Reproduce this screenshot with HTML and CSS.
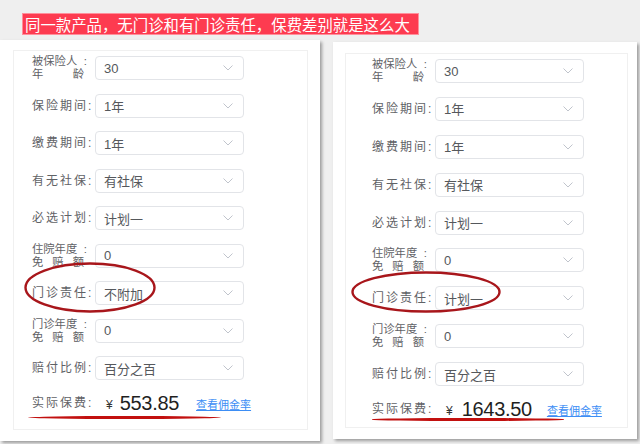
FILE: index.html
```html
<!DOCTYPE html>
<html lang="zh">
<head>
<meta charset="utf-8">
<link rel="stylesheet" href="styles.css">
</head>
<body>
<div class="title">同一款产品，无门诊和有门诊责任，保费差别就是这么大</div>
<div class="panels">
  <div class="panel panel-left">
    <div class="inner">
      <div class="form">
        <div class="label two"><div class="l1"><span>被保险人</span><span>:</span></div><div class="l2"><span>年</span><span>龄</span></div></div>
        <div class="select"><span>30</span><svg class="chev" width="10" height="6" viewBox="0 0 10 6"><path d="M0.5 0.5 L5 5 L9.5 0.5" fill="none" stroke="#c0c4cc" stroke-width="1"/></svg></div>
        <div class="label">保险期间:</div>
        <div class="select"><span>1年</span><svg class="chev" width="10" height="6" viewBox="0 0 10 6"><path d="M0.5 0.5 L5 5 L9.5 0.5" fill="none" stroke="#c0c4cc" stroke-width="1"/></svg></div>
        <div class="label">缴费期间:</div>
        <div class="select"><span>1年</span><svg class="chev" width="10" height="6" viewBox="0 0 10 6"><path d="M0.5 0.5 L5 5 L9.5 0.5" fill="none" stroke="#c0c4cc" stroke-width="1"/></svg></div>
        <div class="label">有无社保:</div>
        <div class="select"><span>有社保</span><svg class="chev" width="10" height="6" viewBox="0 0 10 6"><path d="M0.5 0.5 L5 5 L9.5 0.5" fill="none" stroke="#c0c4cc" stroke-width="1"/></svg></div>
        <div class="label">必选计划:</div>
        <div class="select"><span>计划一</span><svg class="chev" width="10" height="6" viewBox="0 0 10 6"><path d="M0.5 0.5 L5 5 L9.5 0.5" fill="none" stroke="#c0c4cc" stroke-width="1"/></svg></div>
        <div class="label two"><div class="l1"><span>住院年度</span><span>:</span></div><div class="l2"><span>免</span><span>赔</span><span>额</span></div></div>
        <div class="select"><span>0</span><svg class="chev" width="10" height="6" viewBox="0 0 10 6"><path d="M0.5 0.5 L5 5 L9.5 0.5" fill="none" stroke="#c0c4cc" stroke-width="1"/></svg></div>
        <div class="label">门诊责任:</div>
        <div class="select"><span>不附加</span><svg class="chev" width="10" height="6" viewBox="0 0 10 6"><path d="M0.5 0.5 L5 5 L9.5 0.5" fill="none" stroke="#c0c4cc" stroke-width="1"/></svg></div>
        <div class="label two"><div class="l1"><span>门诊年度</span><span>:</span></div><div class="l2"><span>免</span><span>赔</span><span>额</span></div></div>
        <div class="select"><span>0</span><svg class="chev" width="10" height="6" viewBox="0 0 10 6"><path d="M0.5 0.5 L5 5 L9.5 0.5" fill="none" stroke="#c0c4cc" stroke-width="1"/></svg></div>
        <div class="label">赔付比例:</div>
        <div class="select"><span>百分之百</span><svg class="chev" width="10" height="6" viewBox="0 0 10 6"><path d="M0.5 0.5 L5 5 L9.5 0.5" fill="none" stroke="#c0c4cc" stroke-width="1"/></svg></div>
      </div>
      <div class="price-row">
        <div class="label">实际保费:</div>
        <div class="price"><span class="yen">¥</span><span class="amount">553.85</span><a class="link">查看佣金率</a></div>
      </div>
    </div>
    <svg class="ellipse ellipse-left" width="132" height="51" viewBox="0 0 132 51"><ellipse cx="66" cy="25.5" rx="64.5" ry="24" fill="none" stroke="#a8161b" stroke-width="2.4"/></svg>
    <div class="underline underline-left"></div>
  </div>
  <div class="panel panel-right">
    <div class="inner">
      <div class="form">
        <div class="label two"><div class="l1"><span>被保险人</span><span>:</span></div><div class="l2"><span>年</span><span>龄</span></div></div>
        <div class="select"><span>30</span><svg class="chev" width="10" height="6" viewBox="0 0 10 6"><path d="M0.5 0.5 L5 5 L9.5 0.5" fill="none" stroke="#c0c4cc" stroke-width="1"/></svg></div>
        <div class="label">保险期间:</div>
        <div class="select"><span>1年</span><svg class="chev" width="10" height="6" viewBox="0 0 10 6"><path d="M0.5 0.5 L5 5 L9.5 0.5" fill="none" stroke="#c0c4cc" stroke-width="1"/></svg></div>
        <div class="label">缴费期间:</div>
        <div class="select"><span>1年</span><svg class="chev" width="10" height="6" viewBox="0 0 10 6"><path d="M0.5 0.5 L5 5 L9.5 0.5" fill="none" stroke="#c0c4cc" stroke-width="1"/></svg></div>
        <div class="label">有无社保:</div>
        <div class="select"><span>有社保</span><svg class="chev" width="10" height="6" viewBox="0 0 10 6"><path d="M0.5 0.5 L5 5 L9.5 0.5" fill="none" stroke="#c0c4cc" stroke-width="1"/></svg></div>
        <div class="label">必选计划:</div>
        <div class="select"><span>计划一</span><svg class="chev" width="10" height="6" viewBox="0 0 10 6"><path d="M0.5 0.5 L5 5 L9.5 0.5" fill="none" stroke="#c0c4cc" stroke-width="1"/></svg></div>
        <div class="label two"><div class="l1"><span>住院年度</span><span>:</span></div><div class="l2"><span>免</span><span>赔</span><span>额</span></div></div>
        <div class="select"><span>0</span><svg class="chev" width="10" height="6" viewBox="0 0 10 6"><path d="M0.5 0.5 L5 5 L9.5 0.5" fill="none" stroke="#c0c4cc" stroke-width="1"/></svg></div>
        <div class="label">门诊责任:</div>
        <div class="select"><span>计划一</span><svg class="chev" width="10" height="6" viewBox="0 0 10 6"><path d="M0.5 0.5 L5 5 L9.5 0.5" fill="none" stroke="#c0c4cc" stroke-width="1"/></svg></div>
        <div class="label two"><div class="l1"><span>门诊年度</span><span>:</span></div><div class="l2"><span>免</span><span>赔</span><span>额</span></div></div>
        <div class="select"><span>0</span><svg class="chev" width="10" height="6" viewBox="0 0 10 6"><path d="M0.5 0.5 L5 5 L9.5 0.5" fill="none" stroke="#c0c4cc" stroke-width="1"/></svg></div>
        <div class="label">赔付比例:</div>
        <div class="select"><span>百分之百</span><svg class="chev" width="10" height="6" viewBox="0 0 10 6"><path d="M0.5 0.5 L5 5 L9.5 0.5" fill="none" stroke="#c0c4cc" stroke-width="1"/></svg></div>
      </div>
      <div class="price-row">
        <div class="label">实际保费:</div>
        <div class="price"><span class="yen">¥</span><span class="amount">1643.50</span><a class="link">查看佣金率</a></div>
      </div>
    </div>
    <svg class="ellipse ellipse-right" width="150" height="42" viewBox="0 0 150 42"><ellipse cx="75" cy="21" rx="73.5" ry="19.5" fill="none" stroke="#a8161b" stroke-width="2.4"/></svg>
    <div class="underline underline-right"></div>
  </div>
</div>
</body>
</html>
```
FILE: styles.css
```css
html, body {
  margin: 0;
  padding: 0;
}
body {
  width: 640px;
  height: 444px;
  overflow: hidden;
  background: #efefef;
  font-family: "Liberation Sans", "Noto Sans CJK SC", sans-serif;
}
.title {
  display: inline-block;
  box-sizing: border-box;
  margin: 13px 0 0 22px;
  width: 397px;
  height: 22px;
  line-height: 20px;
  padding: 0 0 0 2px;
  background: #fd3b50;
  border: 1px solid #ff8f9b;
  color: #fff;
  font-family: "Noto Sans CJK SC", sans-serif;
  font-size: 15.4px;
  white-space: nowrap;
  vertical-align: top;
}
.panels {
  display: flex;
  align-items: flex-start;
  gap: 13px;
  margin-top: 5px;
}
.panel {
  position: relative;
  box-sizing: border-box;
  background: #fff;
  box-shadow: 2px 2px 3px rgba(0, 0, 0, 0.35);
}
.panel-left {
  width: 320px;
  height: 401px;
  padding: 10px 12px 11px 13px;
}
.panel-right {
  width: 304px;
  height: 397px;
  margin-top: 2px;
  padding: 11px 9px 11px 12px;
}
.inner {
  box-sizing: border-box;
  height: 100%;
  border: 1px solid #f0f0f0;
  padding-top: 5px;
}
.panel-left .inner { padding-left: 18px; }
.panel-right .inner { padding-left: 26px; }
.form {
  display: grid;
  grid-template-columns: 63px 149px;
  grid-auto-rows: 24px;
}
.panel-left .form { row-gap: 13.5px; }
.panel-right .form { row-gap: 13.9px; }
.label {
  align-self: center;
  font-family: "Liberation Sans", "Noto Sans CJK SC", sans-serif;
  font-size: 12px;
  color: #5f6266;
  letter-spacing: 2px;
  white-space: nowrap;
  line-height: 14px;
}
.label.two {
  letter-spacing: 0;
  line-height: 13px;
  font-size: 11.3px;
}
.l1 {
  display: flex;
  justify-content: space-between;
  width: 55px;
}
.l2 {
  display: flex;
  justify-content: space-between;
  width: 52px;
}
.select {
  box-sizing: border-box;
  height: 24px;
  border: 1px solid #e2e4e8;
  border-radius: 4px;
  display: flex;
  align-items: center;
  justify-content: space-between;
  padding: 0 10px 0 8px;
  font-size: 13px;
  color: #55585c;
  font-family: "Liberation Sans", "Noto Sans CJK SC", sans-serif;
}
.chev { display: block; }
.price-row {
  display: grid;
  grid-template-columns: 63px auto;
  height: 24px;
  margin-top: 11px;
}
.price {
  display: flex;
  align-items: center;
  padding-left: 11px;
}
.yen {
  font-size: 12px;
  color: #333;
  margin-right: 7px;
  margin-top: 3px;
}
.panel-right .yen { margin-right: 9px; }
.amount {
  font-size: 20px;
  color: #1f1f1f;
  letter-spacing: -0.3px;
}
.link {
  margin-left: 17px;
  font-family: "Noto Sans CJK SC", sans-serif;
  font-size: 11px;
  color: #3d8ef5;
  text-decoration: underline;
  margin-top: 2px;
}
.panel-right .link { margin-left: 15px; }
.ellipse {
  position: absolute;
  display: block;
}
.ellipse-left { left: 24px; top: 222px; }
.ellipse-right { left: 18px; top: 229px; }
.underline {
  position: absolute;
  height: 3px;
  border-radius: 50%;
  background: #c2100f;
}
.underline-left { left: 28px; top: 376px; width: 193px; }
.underline-right { left: 39px; top: 376px; width: 192px; height: 2.6px; }
```
